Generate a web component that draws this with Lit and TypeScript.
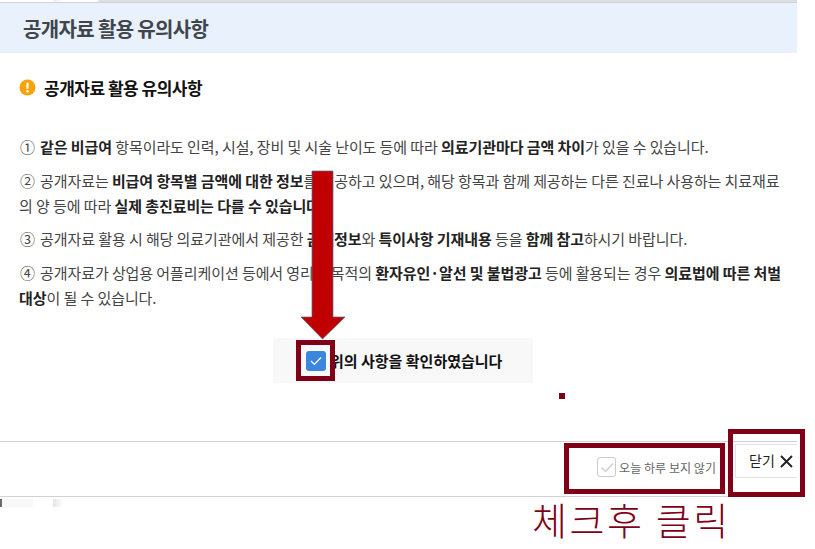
import { LitElement, html, css, svg } from "lit";
import { customElement } from "lit/decorators.js";

@customElement("app-root")
export class AppRoot extends LitElement {
  static styles = css`
    :host { display: block; position: relative; width: 815px; height: 549px; overflow: hidden; background: #fff;
      font-family: "Noto Sans CJK KR", "Noto Sans", sans-serif; color: #333; }
    .modal { width: 797px; display: flex; flex-direction: column; }
    .top { height: 3px; background:
      linear-gradient(#cfd0d6, #cfd0d6) bottom / 100% 1px no-repeat,
      linear-gradient(to right, #fff 0, #fff 53px, #eee 54px, #fff 63px, #fff 96px, #dcdfe1 100px, #dcdfe1 100%); }
    .head { height: 50px; background: #e9f1fd; padding-left: 23px; display: flex; align-items: center;
      font-size: 20px; font-weight: 700; color: #40454b; letter-spacing: -0.65px; }
    .body { padding: 0 10px 0 19px; height: 388px; display: flex; flex-direction: column; }
    .title { display: flex; align-items: center; gap: 8px; margin-top: 23px; height: 22px;
      font-size: 17px; font-weight: 700; color: #111; letter-spacing: -0.5px; }
    .title svg { flex: none; }
    ol { list-style: none; margin: 36px 0 0; padding: 0; display: flex; flex-direction: column; gap: 8.5px;
      font-size: 15px; line-height: 25px; color: #444; letter-spacing: -0.08px; }
    li { margin: 0; }
    .n { display: inline-block; width: 21px; padding-left: 1px; box-sizing: border-box; }
    b { font-weight: 700; color: #222; }
    .confirm { align-self: flex-start; margin: 28.5px 0 0 254px; width: 260px; height: 45px; box-sizing: border-box; background: #f8f8f8;
      display: flex; align-items: center; padding-left: 33px; gap: 4px; font-size: 15px; font-weight: 700; color: #111; }
    .check { width: 20px; height: 20px; border-radius: 3px; background: #3b86de; display: flex; align-items: center; justify-content: center; flex: none; }
    .foot { height: 54px; border-top: 1px solid #d2d2d2; border-bottom: 1px solid #d2d2d2; display: flex; align-items: flex-start; justify-content: flex-end; }
    .today { display: flex; align-items: center; gap: 3px; font-size: 12px; color: #666; margin: 15px 19px 0 0; letter-spacing: 0.05px; }
    .off { width: 19px; height: 20px; box-sizing: border-box; border: 1px solid #ccc; border-radius: 3px; display: flex; align-items: center; justify-content: center; }
    .close { width: 62px; height: 34px; box-sizing: border-box; margin-top: 2px; border: 1px solid #e2e2e2; border-right: none; background: #fff; display: flex; align-items: center; gap: 5px; padding: 0 0 2px 13px;
      font: inherit; font-size: 14px; color: #222; }
    .close svg { margin-top: 2px; }
    .mark { position: absolute; box-sizing: border-box; border: 5px solid #800018; }
    .dot { position: absolute; left: 559px; top: 393px; width: 6px; height: 6px; background: #800018; }
    .arrow { position: absolute; left: 300px; top: 170px; }
    .note { position: absolute; left: 532px; top: 494px; font-size: 38px; line-height: 50px; color: #800018; letter-spacing: 2.6px; white-space: nowrap; font-weight: 300; }
    .scrap { position: absolute; top: 499px; height: 8px; }
    .s1 { left: 0; width: 2px; background: #6b6b6b; }
    .s2 { left: 2px; width: 31px; background: #f8f8f8; }
    .s3 { left: 53px; width: 10px; background: linear-gradient(to right, #e6e6e6, #fff); }
  `;

  render() {
    const items = ["①", "②", "③", "④"];
    return html`
      <div class="modal">
        <div class="top"></div>
        <div class="head">공개자료 활용 유의사항</div>
        <div class="body">
          <div class="title">
            <svg width="17" height="17" viewBox="0 0 17 17"><circle cx="8.5" cy="8.5" r="8" fill="#f9a30a"/><rect x="7.4" y="3.6" width="2.2" height="6.4" rx="1" fill="#fff"/><circle cx="8.5" cy="12.3" r="1.2" fill="#fff"/></svg>
            공개자료 활용 유의사항
          </div>
          <ol>
            <li><span class="n">${items[0]}</span><b>같은 비급여</b> 항목이라도 인력, 시설, 장비 및 시술 난이도 등에 따라 <b>의료기관마다 금액 차이</b>가 있을 수 있습니다.</li>
            <li><span class="n">${items[1]}</span>공개자료는 <b>비급여 항목별 금액에 대한 정보</b>를 제공하고 있으며, 해당 항목과 함께 제공하는 다른 진료나 사용하는 치료재료의 양 등에 따라 <b>실제 총진료비는 다를 수 있습니다.</b></li>
            <li><span class="n">${items[2]}</span>공개자료 활용 시 해당 의료기관에서 제공한 <b>금액정보</b>와 <b>특이사항 기재내용</b> 등을 <b>함께 참고</b>하시기 바랍니다.</li>
            <li><span class="n">${items[3]}</span>공개자료가 상업용 어플리케이션 등에서 영리적 목적의 <b>환자유인·알선 및 불법광고</b> 등에 활용되는 경우 <b>의료법에 따른 처벌 대상</b>이 될 수 있습니다.</li>
          </ol>
          <div class="confirm">
            <span class="check"><svg width="12" height="10" viewBox="0 0 12 10"><path d="M1 5l3.4 3.4L11 1.5" fill="none" stroke="#fff" stroke-width="1.3"/></svg></span>
            위의 사항을 확인하였습니다
          </div>
        </div>
        <div class="foot">
          <div class="today">
            <span class="off"><svg width="14" height="11" viewBox="0 0 14 11"><path d="M1.5 5.5l4 4L13 1.5" fill="none" stroke="#cfcfcf" stroke-width="1.5"/></svg></span>
            오늘 하루 보지 않기
          </div>
          <button class="close">닫기
            <svg width="13" height="13" viewBox="0 0 13 13"><path d="M1 1l11 11M12 1L1 12" stroke="#222" stroke-width="1.9"/></svg>
          </button>
        </div>
      </div>
      <div class="scrap s1"></div><div class="scrap s2"></div><div class="scrap s3"></div>

      <svg class="arrow" width="46" height="172" viewBox="0 0 46 172">
        ${svg`<path d="M12 1H33V147H45L22.5 169L1 147H12Z" fill="#c00000" stroke="#4a6a94" stroke-width="0.7"/>`}
      </svg>
      <div class="mark" style="left:296px;top:340px;width:39px;height:41px"></div>
      <div class="mark" style="left:564px;top:443px;width:161px;height:51px"></div>
      <div class="mark" style="left:728px;top:429px;width:77px;height:68px"></div>
      <div class="dot"></div>
      <div class="note">체크후 클릭</div>
    `;
  }
}
